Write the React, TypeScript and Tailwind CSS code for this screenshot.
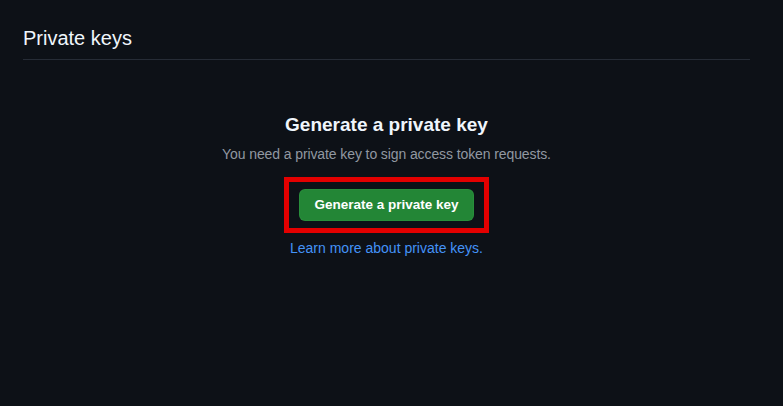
export default function App() {
  return (
    <div
      className="min-h-[406px] w-full bg-[#0d1117] pl-[23px] pr-[33px] text-[#f0f6fc]"
      style={{ fontFamily: '"Liberation Sans", Arial, sans-serif' }}
    >
      {/* Header */}
      <div className="border-b border-[#262c36] pt-[23px] pb-[6px]">
        <h2 className="text-[20px] leading-[30px] font-normal">Private keys</h2>
      </div>

      {/* Blank slate */}
      <div className="flex flex-col items-center pt-[50px]">
        <h3 className="text-[19px] leading-[30px] font-semibold">Generate a private key</h3>
        <p className="mt-[4px] text-[14px] leading-[21px] text-[#9198a1] tracking-[-0.1px]">
          You need a private key to sign access token requests.
        </p>
        <div className="mt-[12px] border-[5px] border-[#e30000] px-[10px] py-[7px]">
          <button className="h-[32px] w-[175px] rounded-[6px] border border-[#2f9a44]/40 bg-[#238636] text-[13.5px] font-semibold text-white">
            Generate a private key
          </button>
        </div>
        <a href="#" className="mt-[5px] text-[14px] leading-[21px] text-[#4493f8]">
          Learn more about private keys.
        </a>
      </div>
    </div>
  );
}
